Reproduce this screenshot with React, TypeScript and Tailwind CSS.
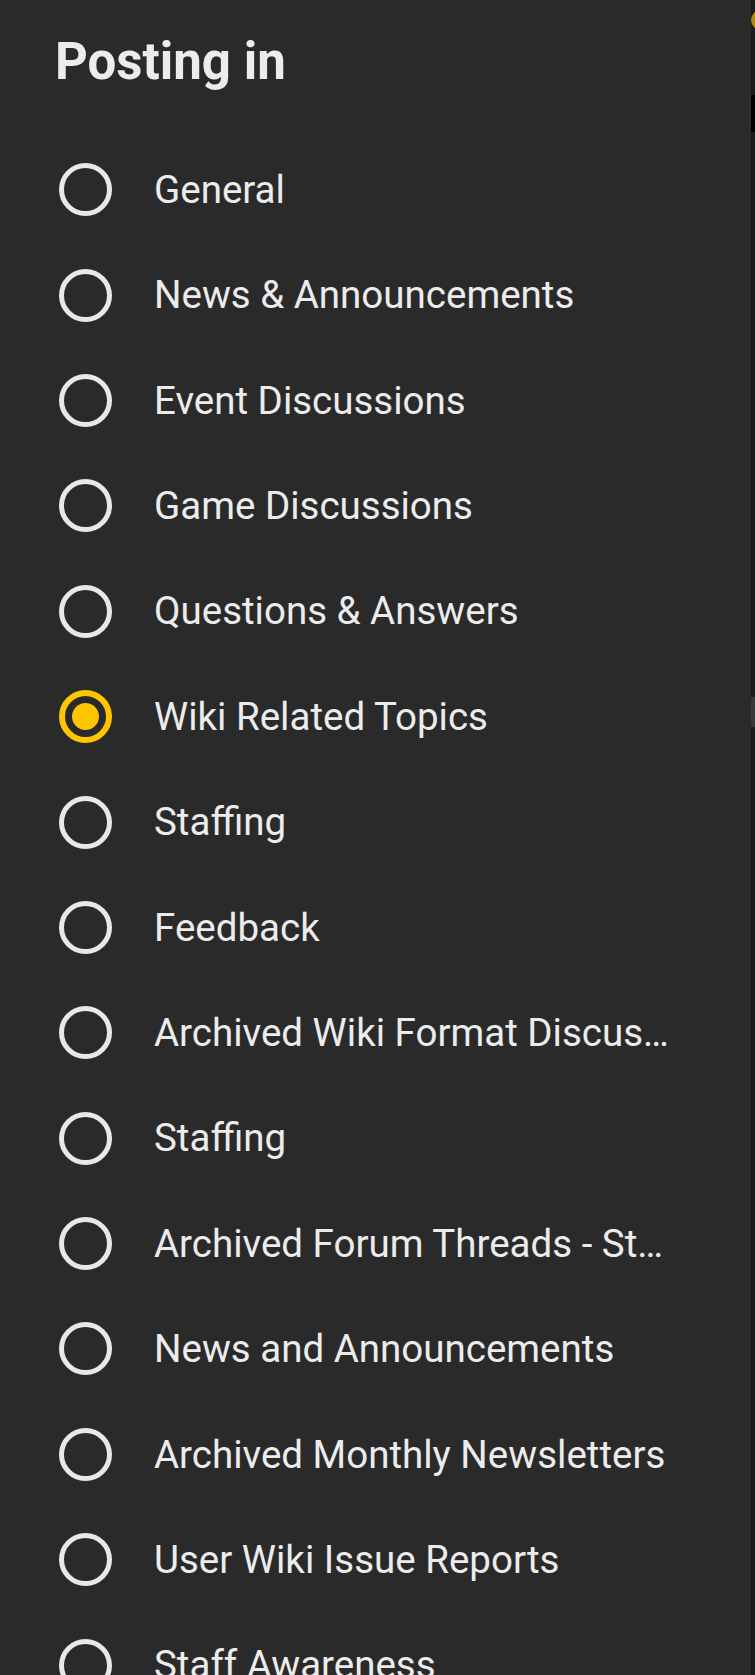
import { useState } from 'react';

const boards = [
  'General',
  'News & Announcements',
  'Event Discussions',
  'Game Discussions',
  'Questions & Answers',
  'Wiki Related Topics',
  'Staffing',
  'Feedback',
  'Archived Wiki Format Discus…',
  'Staffing',
  'Archived Forum Threads - St…',
  'News and Announcements',
  'Archived Monthly Newsletters',
  'User Wiki Issue Reports',
  'Staff Awareness',
];

function Radio({ checked }: { checked: boolean }) {
  if (checked) {
    return (
      <span className="w-[53px] h-[53px] shrink-0 rounded-full border-[6px] border-[#ffc500] flex items-center justify-center">
        <span className="w-[27px] h-[27px] rounded-full bg-[#ffc500]" />
      </span>
    );
  }
  return <span className="w-[53px] h-[53px] shrink-0 rounded-full border-[5.5px] border-[#e8e8e8]" />;
}

export default function App() {
  const [selected, setSelected] = useState(5);

  return (
    <div className="flex min-h-[1675px] bg-[#1c1c1c] font-['Roboto',sans-serif]">
      <div className="flex-1 bg-[#2a2a2a] pt-[32px] pl-[51px] pr-[70px]">
        <h1 className="pl-[4px] text-[51px] leading-[60px] font-bold text-[#ececec]">Posting in</h1>

        <ul className="mt-[45px]">
          {boards.map((name, i) => (
            <li
              key={i}
              onClick={() => setSelected(i)}
              className="h-[105.4px] flex items-center gap-[42px] pl-[8px] cursor-pointer"
            >
              <Radio checked={i === selected} />
              <span className="text-[38.5px] text-[#ececec] truncate">{name}</span>
            </li>
          ))}
        </ul>
      </div>

      {/* sliver of the page behind the drawer */}
      <div className="relative w-[4px] overflow-hidden">
        <span className="absolute top-[10px] left-0 w-[20px] h-[20px] rounded-full bg-[#b08a10]" />
        <span className="absolute top-[95px] left-0 w-full h-[37px] bg-black" />
        <span className="absolute top-[697px] left-0 w-full h-[30px] bg-[#3a3a3a]" />
      </div>
    </div>
  );
}
